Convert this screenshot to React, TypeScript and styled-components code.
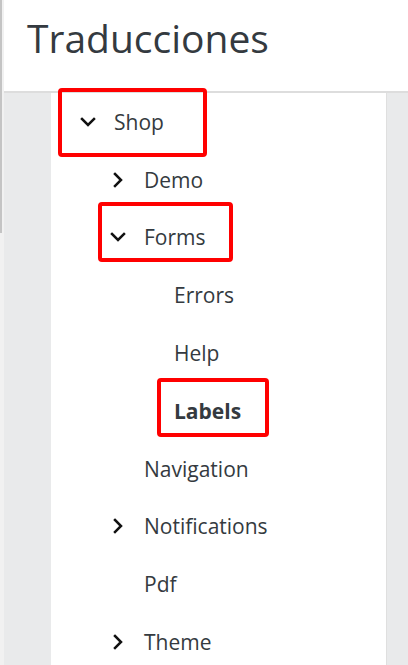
import React from 'react';
import styled, { createGlobalStyle } from 'styled-components';

const GlobalStyle = createGlobalStyle`
  html, body {
    margin: 0;
    padding: 0;
    background: #e9eaeb;
    font-family: "Open Sans", "Noto Sans", sans-serif;
  }
`;

type Box = { x: number; y: number; w: number; h: number };

type Node = {
  label: string;
  level: number;
  toggle?: 'open' | 'closed';
  bold?: boolean;
  mark?: Box;
};

const nodes: Node[] = [
  { label: 'Shop', level: 0, toggle: 'open', mark: { x: 7, y: -5, w: 149, h: 69 } },
  { label: 'Demo', level: 1, toggle: 'closed' },
  { label: 'Forms', level: 1, toggle: 'open', mark: { x: 47, y: -7, w: 135, h: 60 } },
  { label: 'Errors', level: 2 },
  { label: 'Help', level: 2 },
  { label: 'Labels', level: 2, bold: true, mark: { x: 106, y: -4, w: 112, h: 59 } },
  { label: 'Navigation', level: 1 },
  { label: 'Notifications', level: 1, toggle: 'closed' },
  { label: 'Pdf', level: 1 },
  { label: 'Theme', level: 1, toggle: 'closed' },
];

const Chevron = ({ dir }: { dir: 'open' | 'closed' }) => (
  <svg width="20" height="20" viewBox="0 0 20 20" fill="none">
    <path
      d={dir === 'open' ? 'M4 7 L10 13 L16 7' : 'M7 4 L13 10 L7 16'}
      stroke="#111"
      strokeWidth="2.5"
      strokeLinecap="square"
    />
  </svg>
);

const App = () => {
  return (
    <Page>
      <GlobalStyle />
      <ScrollTrack>
        <Thumb />
      </ScrollTrack>
      <Main>
        <Header>
          <Title>Traducciones</Title>
        </Header>
        <Body>
          <Panel>
            <Tree>
              {nodes.map((n) => (
                <Row key={n.label} $level={n.level}>
                  <Toggle>{n.toggle && <Chevron dir={n.toggle} />}</Toggle>
                  <Label $bold={n.bold}>{n.label}</Label>
                  {n.mark && <Mark $box={n.mark} />}
                </Row>
              ))}
            </Tree>
          </Panel>
        </Body>
      </Main>
    </Page>
  );
};

const Page = styled.div`
  display: flex;
  min-height: 100vh;
  background: #e9eaeb;
`;

const ScrollTrack = styled.div`
  flex: none;
  width: 4px;
  background: #f1f1f1;
`;

const Thumb = styled.div`
  width: 2px;
  height: 233px;
  background: #c4c4c4;
`;

const Main = styled.div`
  flex: 1;
  display: flex;
  flex-direction: column;
`;

const Header = styled.header`
  box-sizing: border-box;
  height: 93px;
  padding: 11px 0 0 23px;
  background: #fff;
  border-bottom: 2px solid #dddddd;
`;

const Title = styled.h1`
  margin: 0;
  font-size: 39px;
  font-weight: 400;
  line-height: normal;
  color: #343a40;
`;

const Body = styled.div`
  flex: 1;
  display: flex;
  padding-left: 47px;
  background: #e9eaeb;
`;

const Panel = styled.div`
  width: 335px;
  background: #fff;
  border-right: 1px solid #dfdfdf;
`;

const Tree = styled.ul`
  list-style: none;
  margin: 0;
  padding: 0;
`;

const Row = styled.li<{ $level: number }>`
  position: relative;
  box-sizing: border-box;
  display: flex;
  align-items: center;
  height: 57.8px;
  padding-left: ${(p) => 27 + p.$level * 30}px;
`;

const Toggle = styled.span`
  flex: none;
  display: flex;
  width: 20px;
  height: 20px;
  margin-right: 16px;
`;

const Label = styled.span<{ $bold?: boolean }>`
  font-size: 21px;
  font-weight: ${(p) => (p.$bold ? 700 : 400)};
  color: #343a40;
`;

const Mark = styled.span<{ $box: Box }>`
  position: absolute;
  z-index: 2;
  box-sizing: border-box;
  left: ${(p) => p.$box.x}px;
  top: ${(p) => p.$box.y}px;
  width: ${(p) => p.$box.w}px;
  height: ${(p) => p.$box.h}px;
  border: 4px solid #ff0000;
  border-radius: 4px;
  pointer-events: none;
`;

export default App;
